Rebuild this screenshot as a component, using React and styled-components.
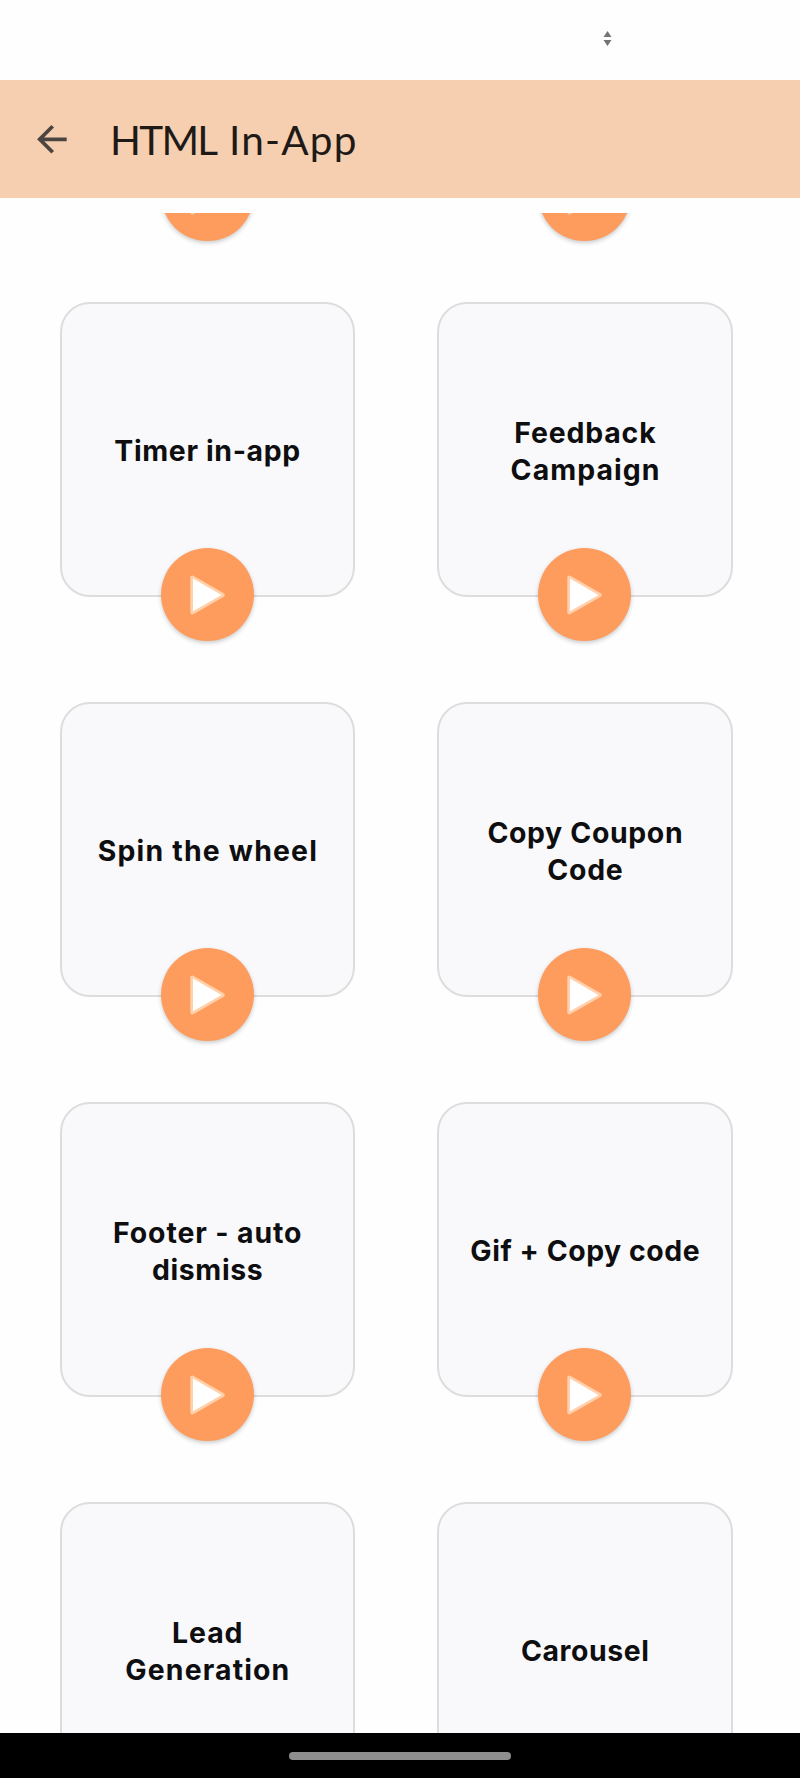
import React from "react";
import styled, { createGlobalStyle } from "styled-components";

const GlobalStyle = createGlobalStyle`
  * { box-sizing: border-box; }
  body { margin: 0; background: #fefefe; }
`;

const Screen = styled.div`
  width: 800px;
  height: 1778px;
  display: flex;
  flex-direction: column;
  overflow: hidden;
  background: #fefefe;
  font-family: Inter, "Liberation Sans", sans-serif;
`;

const StatusBar = styled.div`
  height: 80px;
  flex: none;
  display: flex;
  justify-content: flex-end;
  padding: 31px 188px 0 0;
`;

const AppBar = styled.header`
  height: 118.4px;
  flex: none;
  display: flex;
  align-items: center;
  padding-left: 36px;
  background: #f6cfb0;
`;

const BackButton = styled.button`
  width: 32px;
  height: 32px;
  padding: 0;
  border: 0;
  background: none;
  svg { display: block; }
`;

const Title = styled.h1`
  display: flex;
  gap: 12.5px;
  margin: 2px 0 0 42px;
  font: 400 40.5px/48px Lato, "Open Sans", sans-serif;
  color: #1f1a18;
  white-space: pre;
`;

const Word = styled.span`
  letter-spacing: ${(p) => p.$tracking}px;
`;

const ScrollArea = styled.main`
  flex: 1;
  min-height: 0;
  margin-top: 14.6px;
  overflow: hidden;
  display: flex;
  flex-direction: column;
  justify-content: flex-start;
`;

const Grid = styled.div`
  flex: none;
  display: grid;
  grid-template-columns: 295.4px 295.4px;
  grid-auto-rows: 295.4px;
  column-gap: 82.3px;
  row-gap: 104.6px;
  padding-left: 59.6px;
  margin-top: -311px;
`;

const Card = styled.article`
  position: relative;
  display: flex;
  flex-direction: column;
  align-items: center;
  justify-content: center;
  padding-top: 4px;
  border: 2px solid #dddddd;
  border-radius: 30px;
  background: #f9f9fb;
`;

const Line = styled.span`
  font-weight: 700;
  font-size: 28.4px;
  line-height: 36.4px;
  letter-spacing: ${(p) => p.$tracking}px;
  margin-right: ${(p) => -p.$tracking}px;
  color: #0e0e10;
  white-space: pre;
`;

const PlayButton = styled.button`
  position: absolute;
  left: 50%;
  bottom: -45.6px;
  width: 93px;
  height: 93px;
  margin-left: -46.5px;
  padding: 0;
  border: 0;
  border-radius: 50%;
  background: #fe9c5e;
  box-shadow: 0 2px 4px rgba(0, 0, 0, 0.2);
  svg { display: block; }
`;

const NavigationBar = styled.footer`
  height: 45px;
  flex: none;
  display: flex;
  justify-content: center;
  padding-top: 19px;
  background: #000;
`;

const HomeHandle = styled.div`
  width: 222px;
  height: 8px;
  border-radius: 4px;
  background: #8e8e8e;
`;

const cards = [
  [],
  [],
  [["Timer in-app", 0.65]],
  [["Feedback", 0.85], ["Campaign", 1.05]],
  [["Spin the wheel", 1.2]],
  [["Copy Coupon", 0.65], ["Code", 0.8]],
  [["Footer - auto", 0.9], ["dismiss", 0.65]],
  [["Gif + Copy code", 0.55]],
  [["Lead", 0.9], ["Generation", 1.15]],
  [["Carousel", 0.6]],
];

const PlayIcon = () => (
  <svg width="93" height="93" viewBox="0 0 93 93">
    <path d="M31.3 29.5 L61.8 47 L31.3 64.5Z" fill="#ffd0aa" stroke="#ffd0aa" strokeWidth="4" strokeLinejoin="round" />
    <path d="M32 30.5 L60.5 47 L32 63.3Z" fill="#fff" />
  </svg>
);

export default function App() {
  return (
    <Screen>
      <GlobalStyle />
      <StatusBar>
        <svg width="9" height="16" viewBox="0 0 9 16" fill="#747474">
          <path d="M4.5 0 L8.5 6 H0.5Z M0.5 9 H8.5 L4.5 15Z" />
        </svg>
      </StatusBar>
      <AppBar>
        <BackButton aria-label="Back">
          <svg width="32" height="32" viewBox="0 0 32 32" fill="none" stroke="#4c4440" strokeWidth="3.7">
            <path d="M30.7 16.3 H4 M16.7 3.3 L3.7 16.3 L16.7 29.3" />
          </svg>
        </BackButton>
        <Title>
          <Word $tracking={-1.7}>HTML</Word>
          <Word $tracking={1.2}>In-App</Word>
        </Title>
      </AppBar>
      <ScrollArea>
        <Grid>
          {cards.map((lines, i) => (
            <Card key={i}>
              {lines.map(([text, tracking]) => (
                <Line key={text} $tracking={tracking}>{text}</Line>
              ))}
              <PlayButton aria-label="Play">
                <PlayIcon />
              </PlayButton>
            </Card>
          ))}
        </Grid>
      </ScrollArea>
      <NavigationBar>
        <HomeHandle />
      </NavigationBar>
    </Screen>
  );
}
